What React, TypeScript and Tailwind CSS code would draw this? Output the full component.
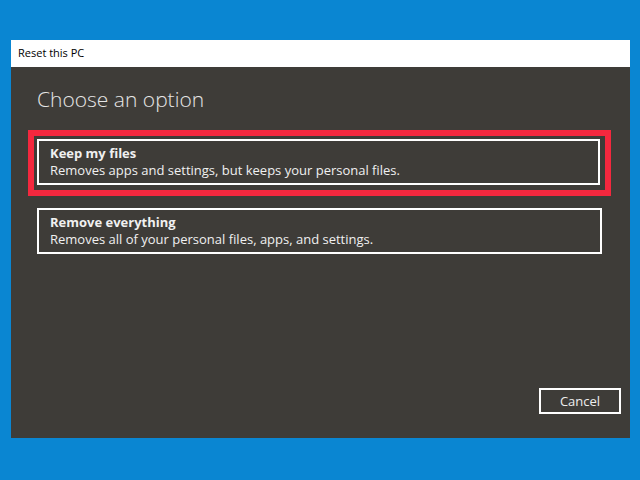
export default function App() {
  return (
    <div
      className="w-[640px] h-[480px] bg-[#0a86d2] pt-[40px] pl-[11px]"
      style={{ fontFamily: '"Open Sans", "Noto Sans", sans-serif' }}
    >
      <div className="w-[619px] h-[398px] flex flex-col">
        <div className="h-[27px] bg-white flex items-center px-[7px] text-[11px] text-black">
          Reset this PC
        </div>
        <div className="flex-1 bg-[#3e3c38] flex flex-col pl-[26px] pr-[28px] pb-[24px]">
          <h1 className="mt-[18px] text-[21px] font-light text-[#e6e6e6] leading-[28px]">Choose an option</h1>
          <div className="mt-[17px] mx-[-9px] border-[6px] border-[#f4283e] p-[3px] pr-[5px] pb-[5px]">
            <button className="w-full text-left border-2 border-white px-[11px] py-[4px] text-[#f0f0f0]">
              <div className="text-[13px] font-bold leading-[17px]">Keep my files</div>
              <div className="text-[13px] leading-[17px]">Removes apps and settings, but keeps your personal files.</div>
            </button>
          </div>
          <button className="mt-[12px] w-full text-left border-2 border-white px-[11px] py-[4px] text-[#f0f0f0]">
            <div className="text-[13px] font-bold leading-[17px]">Remove everything</div>
            <div className="text-[13px] leading-[17px]">Removes all of your personal files, apps, and settings.</div>
          </button>
          <div className="flex-1" />
          <div className="flex justify-end mr-[-19px]">
            <button className="w-[82px] h-[26px] border-2 border-white text-[13px] text-[#eeeeee] leading-none">
              Cancel
            </button>
          </div>
        </div>
      </div>
    </div>
  );
}
